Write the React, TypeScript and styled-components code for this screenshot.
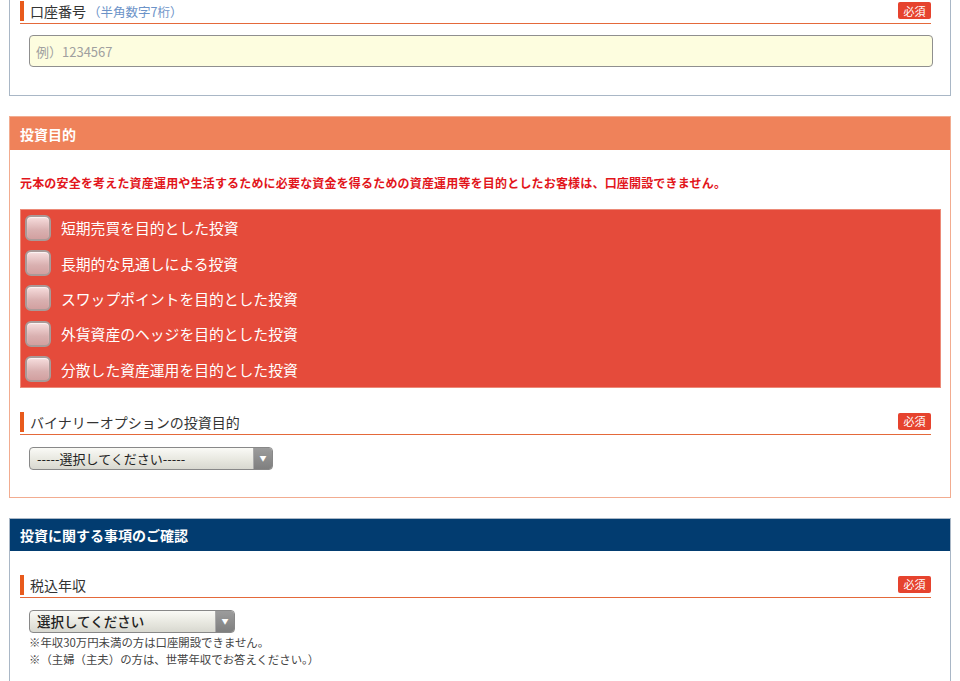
import React from "react";
import styled, { createGlobalStyle } from "styled-components";

const Global = createGlobalStyle`
  html, body { margin: 0; padding: 0; background: #ffffff; }
  body {
    font-family: "Noto Sans CJK JP", "Noto Sans", "Liberation Sans", sans-serif;
    color: #333;
  }
  * { box-sizing: border-box; }
`;

const Page = styled.div`
  padding: 0 9px 0 9px;
  width: 960px;
  display: flex;
  flex-direction: column;
  gap: 20px;
`;

type Tone = "blue" | "orange";

const Section = styled.section<{ $tone: Tone; $cut?: boolean }>`
  width: 942px;
  border: 1px solid ${(p) => (p.$tone === "orange" ? "#f2ac90" : "#a9b7c6")};
  border-top-width: ${(p) => (p.$cut ? "0" : "1px")};
  background: #fff;
`;

const Header = styled.h2<{ $tone: Tone }>`
  margin: 0;
  height: ${(p) => (p.$tone === "orange" ? 33 : 32)}px;
  padding: 0 10px;
  display: flex;
  align-items: center;
  font-size: 14px;
  font-weight: bold;
  color: #fff;
  background: ${(p) => (p.$tone === "orange" ? "#ef825a" : "#023c70")};
`;

const Body = styled.div<{ $top: number; $bottom: number }>`
  padding: ${(p) => p.$top}px 9px ${(p) => p.$bottom}px 10px;
  display: flex;
  flex-direction: column;
`;

const LabelRow = styled.div<{ $gap?: number }>`
  margin: ${(p) => p.$gap ?? 0}px 10px 0 0;
  height: 22px;
  display: flex;
  align-items: flex-start;
  justify-content: space-between;
  border-bottom: 1px solid #e4693a;
`;

const LabelText = styled.div`
  border-left: 4px solid #e85a1c;
  padding-left: 6px;
  height: 20px;
  display: flex;
  align-items: center;
  font-size: 14px;
  color: #333;
  margin-top: -1px;
`;

const Sub = styled.span`
  font-size: 12.5px;
  color: #6c93c8;
  margin-left: 2px;
`;

const Badge = styled.span`
  background: #e6432e;
  color: #fff;
  font-size: 11px;
  height: 17px;
  width: 33px;
  border-radius: 2px;
  display: flex;
  align-items: center;
  justify-content: center;
`;

const TextInput = styled.input`
  margin: 11px 8px 0 9px;
  height: 32px;
  border: 1px solid #8f8f8f;
  border-radius: 4px;
  background: #fdfddf;
  padding: 0 6px;
  font-size: 13px;
  font-family: inherit;
  color: #333;
  &::placeholder { color: #a0a0a0; }
`;

const Notice = styled.p`
  margin: 0;
  font-size: 12px;
  font-weight: bold;
  color: #e2151b;
  line-height: 16px;
  letter-spacing: 0.18px;
`;

const RedBox = styled.div`
  margin-top: 18px;
  background: #e54b3b;
  border: 1px solid #ec8a78;
  padding: 0 0 0 4px;
  display: flex;
  flex-direction: column;
`;

const CheckRow = styled.label`
  height: 35.4px;
  display: flex;
  align-items: center;
  gap: 10px;
  color: #fff;
  font-size: 14.8px;
`;

const Box = styled.span`
  width: 26px;
  height: 26px;
  border-radius: 6px;
  border: 2px solid #a99a98;
  background: linear-gradient(#f7dede, #d9b0b0 60%, #d2a0a0);
  box-shadow: inset 0 1px 1px rgba(255,255,255,0.7);
  flex: none;
`;

const SelectWrap = styled.div<{ $w: number; $top: number }>`
  margin: ${(p) => p.$top}px 0 0 9px;
  width: ${(p) => p.$w}px;
  height: 23px;
  border: 1px solid #888;
  border-radius: 4px;
  display: flex;
  overflow: hidden;
  background: linear-gradient(#fafaf6, #e6e6de 60%, #d8d8d0);
`;

const SelectText = styled.div<{ $bold?: boolean }>`
  flex: 1;
  display: flex;
  align-items: center;
  padding-left: 7px;
  font-size: ${(p) => (p.$bold ? 13.5 : 13)}px;
  color: #222;
  font-weight: ${(p) => (p.$bold ? 500 : 400)};
`;

const Arrow = styled.div`
  width: 19px;
  background: linear-gradient(#9c9c9c, #7f7f7f);
  display: flex;
  align-items: center;
  justify-content: center;
  color: #fff;
  font-size: 7px;
  border-left: 1px solid #aaa;
`;

const Note = styled.p`
  margin: 0;
  padding-left: 9px;
  font-size: 11.4px;
  color: #444;
  line-height: 17px;
`;

const Notes = styled.div`
  margin-top: 1px;
`;

const purposes = [
  "短期売買を目的とした投資",
  "長期的な見通しによる投資",
  "スワップポイントを目的とした投資",
  "外貨資産のヘッジを目的とした投資",
  "分散した資産運用を目的とした投資",
];

function Select({ w, top, text, bold }: { w: number; top: number; text: string; bold?: boolean }) {
  return (
    <SelectWrap $w={w} $top={top}>
      <SelectText $bold={bold}>{text}</SelectText>
      <Arrow>▼</Arrow>
    </SelectWrap>
  );
}

export default function App() {
  return (
    <>
      <Global />
      <Page>
        <Section $tone="blue" $cut>
          <Body $top={2} $bottom={28}>
            <LabelRow>
              <LabelText>
                口座番号<Sub>（半角数字7桁）</Sub>
              </LabelText>
              <Badge>必須</Badge>
            </LabelRow>
            <TextInput placeholder="例）1234567" />
          </Body>
        </Section>

        <Section $tone="orange">
          <Header $tone="orange">投資目的</Header>
          <Body $top={25} $bottom={27}>
            <Notice>
              元本の安全を考えた資産運用や生活するために必要な資金を得るための資産運用等を目的としたお客様は、口座開設できません。
            </Notice>
            <RedBox>
              {purposes.map((p) => (
                <CheckRow key={p}>
                  <Box />
                  {p}
                </CheckRow>
              ))}
            </RedBox>
            <LabelRow $gap={25}>
              <LabelText>バイナリーオプションの投資目的</LabelText>
              <Badge>必須</Badge>
            </LabelRow>
            <Select w={244} top={12} text="-----選択してください-----" />
          </Body>
        </Section>

        <Section $tone="blue">
          <Header $tone="blue">投資に関する事項のご確認</Header>
          <Body $top={25} $bottom={40}>
            <LabelRow>
              <LabelText>税込年収</LabelText>
              <Badge>必須</Badge>
            </LabelRow>
            <Select w={206} top={12} text="選択してください" bold />
            <Notes>
              <Note>※年収30万円未満の方は口座開設できません。</Note>
              <Note>※（主婦（主夫）の方は、世帯年収でお答えください。）</Note>
            </Notes>
          </Body>
        </Section>
      </Page>
    </>
  );
}
